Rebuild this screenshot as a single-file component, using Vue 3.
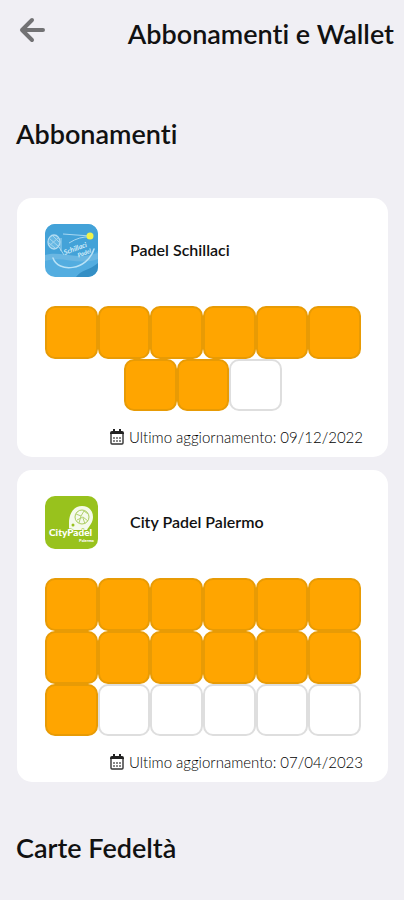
<script setup>
const passes = [
  { id: 'schillaci', name: 'Padel Schillaci', total: 9, used: 8, updated: '09/12/2022', iso: '2022-12-09' },
  { id: 'city', name: 'City Padel Palermo', total: 18, used: 13, updated: '07/04/2023', iso: '2023-04-07' },
]
</script>

<template>
  <div class="page">
    <header class="topbar">
      <button class="back" type="button" aria-label="Indietro">
        <svg viewBox="0 0 28 28" aria-hidden="true">
          <path d="M25 14H4M14 4L4 14L14 24" />
        </svg>
      </button>
      <h1 class="title">Abbonamenti e Wallet</h1>
    </header>

    <main>
      <section>
        <h2 class="heading">Abbonamenti</h2>
        <div class="cards">
          <article v-for="pass in passes" :key="pass.id" class="card">
            <div class="club">
              <svg v-if="pass.id === 'schillaci'" class="logo" viewBox="0 0 53 53" aria-hidden="true">
                <defs>
                  <clipPath id="blue-tile"><rect width="53" height="53" rx="10" /></clipPath>
                </defs>
                <g clip-path="url(#blue-tile)">
                  <rect width="53" height="53" fill="#53ade0" />
                  <path d="M0 0H53V27C38 37 21 28 0 34Z" fill="#43a2d8" />
                  <path d="M0 31C16 26 31 37 53 29V35C33 42 17 31 0 37Z" fill="#6bb7e2" />
                  <path d="M31 53C36 46 45 46 53 39V53Z" fill="#348fc5" />
                  <path d="M18 10L45 12M24 19Q35 12 45 13" fill="none" stroke="#a7d7f1" stroke-width="1" />
                  <path d="M8 34C13 49 42 47 49 25" fill="none" stroke="#b9e2f6" stroke-width="1.5" stroke-linecap="round" />
                  <ellipse cx="9" cy="18" rx="6" ry="7" fill="#65b7e3" stroke="#b3dcf2" stroke-width="1.3" />
                  <path d="M5 15L13 22M4 19L10 24M8 12L14 18M4 22L13 14M14 23L19 31M16 14V27" fill="none" stroke="#a5d5ee" stroke-width="1" />
                  <g transform="rotate(-20 30 24)" fill="#d4edfa" font-family="Lato, sans-serif" font-style="italic" font-weight="700">
                    <text x="18" y="27" font-size="7">Schillaci</text>
                    <text x="30" y="34" font-size="6">Padel</text>
                  </g>
                  <circle cx="45" cy="12" r="3.5" fill="#f0f34a" />
                </g>
              </svg>
              <svg v-else class="logo" viewBox="0 0 53 53" aria-hidden="true">
                <rect width="53" height="53" rx="10" fill="#98c21d" />
                <path d="M24 34V27C24 17 29 10 37 10C44 10 48 15 48 21C48 27 44 30 42 34Z" fill="#f5faeb" />
                <circle cx="37" cy="21" r="7" fill="none" stroke="#a8cb58" stroke-width="1" />
                <path d="M31 18L36 20L39 15L43 18M32 24L38 21L43 25M36 20L34 27M38 22L40 28" fill="none" stroke="#b2d070" stroke-width="1" />
                <circle cx="28" cy="29" r="1.5" fill="#98c21d" />
                <g fill="#fff" font-family="Lato, sans-serif" font-weight="900">
                  <text x="4" y="40" font-size="10" stroke="#98c21d" stroke-width="1" paint-order="stroke">CityPadel</text>
                  <text x="34" y="46" font-size="4">Palermo</text>
                </g>
              </svg>
              <h3 class="name">{{ pass.name }}</h3>
            </div>

            <ul class="stamps" :aria-label="`${pass.used} / ${pass.total}`">
              <li v-for="n in pass.total" :key="n" class="stamp" :class="{ filled: n <= pass.used }"></li>
            </ul>

            <p class="updated">
              <svg class="calendar" viewBox="0 0 14 16" aria-hidden="true">
                <path d="M1 4V14Q1 15 2 15H12Q13 15 13 14V4" fill="none" stroke="#333" stroke-width="1.4" />
                <path d="M0 5V4Q0 2 2 2H3V0H5V2H9V0H11V2H12Q14 2 14 4V5Z" fill="#222" />
                <path d="M3 8H5V10H3ZM6 8H8V10H6ZM9 8H11V10H9ZM3 11H5V13H3ZM6 11H8V13H6ZM9 11H11V13H9Z" fill="#888" />
              </svg>
              <span>Ultimo aggiornamento: <time :datetime="pass.iso">{{ pass.updated }}</time></span>
            </p>
          </article>
        </div>
      </section>

      <section>
        <h2 class="heading">Carte Fedeltà</h2>
      </section>
    </main>
  </div>
</template>

<style>
body {
  margin: 0;
  background: #f0eff4;
}
</style>

<style scoped>
.page {
  box-sizing: border-box;
  min-height: 100vh;
  padding: 0 16px;
  background: #f0eff4;
  color: #111;
  font-family: Lato, sans-serif;
  font-variant-ligatures: none;
}

h1,
h2,
h3,
p,
ul {
  margin: 0;
  padding: 0;
}

.topbar {
  display: flex;
  align-items: flex-start;
  justify-content: space-between;
  margin-right: -6px;
  padding-top: 16px;
}

.back {
  display: flex;
  margin: 0;
  padding: 0 2px;
  border: 0;
  background: none;
  cursor: pointer;
}

.back svg {
  width: 28px;
  height: 28px;
  fill: none;
  stroke: #727274;
  stroke-width: 4;
  stroke-linecap: round;
  stroke-linejoin: round;
}

.title,
.heading {
  font-size: 27px;
  font-weight: 600;
  line-height: 36px;
}

.heading {
  padding: 64px 0 46px;
}

section + section .heading {
  padding-top: 48px;
}

.cards {
  display: grid;
  gap: 13px;
}

.card {
  margin: 0 0 0 1px;
  padding: 26px 27px 10px 28px;
  border-radius: 15px;
  background: #fff;
}

.club {
  display: flex;
  align-items: center;
  gap: 32px;
}

.logo {
  flex: none;
  width: 53px;
  height: 53px;
}

.name {
  padding-bottom: 2px;
  font-size: 16px;
  font-weight: 600;
  line-height: 24px;
}

.stamps {
  display: flex;
  flex-wrap: wrap;
  justify-content: center;
  margin-top: 29px;
  list-style: none;
}

.stamp {
  box-sizing: border-box;
  width: calc(100% / 6);
  aspect-ratio: 1;
  border: 2px solid #dedede;
  border-radius: 10px;
  background: #fff;
}

.stamp.filled {
  border-color: #e89b05;
  background: #ffa500;
}

.updated {
  display: flex;
  align-items: center;
  justify-content: flex-end;
  gap: 5px;
  margin: 16px -2px 0 0;
  color: #000;
  font-size: 15px;
  font-weight: 300;
  line-height: 20px;
}

.calendar {
  width: 14px;
  height: 16px;
}
</style>
